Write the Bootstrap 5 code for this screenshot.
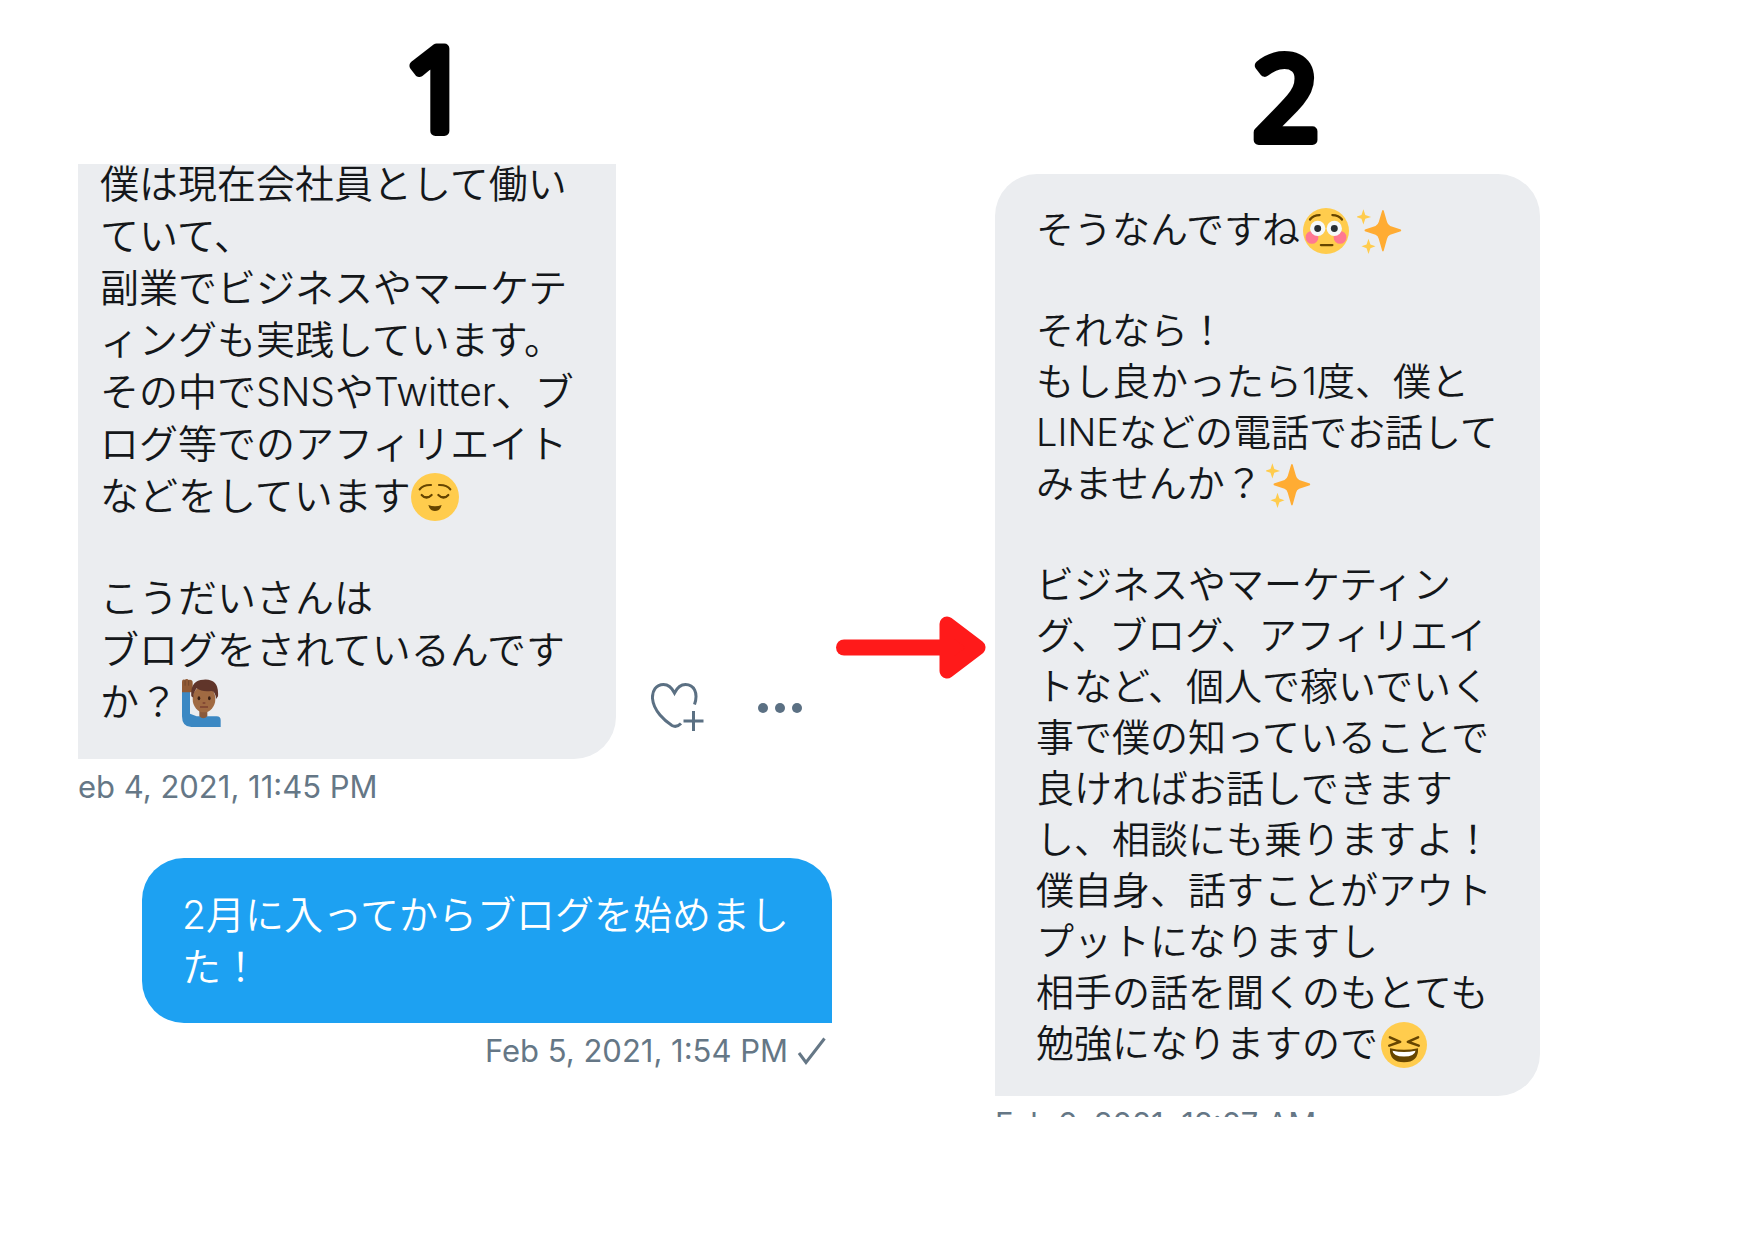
<!DOCTYPE html>
<html lang="ja">
<head>
<meta charset="utf-8">
<meta name="viewport" content="width=device-width, initial-scale=1">
<title>DM 1 → 2</title>
<link rel="stylesheet" href="https://cdn.jsdelivr.net/npm/bootstrap@5.3.0/dist/css/bootstrap.min.css">
<style>
  body { background: #fff; font-family: Inter, "Noto Sans CJK JP", sans-serif; color: #14171a; }
  .flow-grid { display: grid; grid-template-columns: 754fr 163fr 545fr; padding: 0 207px 0 78px; }
  .step-one { height: 164px; padding: 44px 0 0 329px; }
  .step-two { height: 174px; padding: 53px 0 0 260px; }
  .step-svg { font: 400 115px "Open Sans", sans-serif; stroke: #000; stroke-width: 10px; stroke-linejoin: round; overflow: visible; }
  .bubble { line-break: normal; font-weight: 350; }
  .bubble p { margin: 0; }
  .bubble p + p { margin-top: 50px; }
  .bubble-cut { width: 538px; height: 595px; padding: 0 37px 31px 22px; border-radius: 0 0 42px 0; background: #ebedf0; font-size: 39px; line-height: 52px; }
  .bubble-sent { width: 690px; padding: 31px 40px 30px 40px; border-radius: 42px 42px 0 42px; background: #1da1f2; color: #fff; font-size: 39px; line-height: 52px; }
  .bubble-in { padding: 30px 37px 27px 41px; border-radius: 42px 42px 42px 0; background: #ebedf0; font-size: 38px; line-height: 51px; }
  .stamp { font-size: 31px; line-height: 40px; color: #657786; white-space: nowrap; }
  .stamp-cut { height: 21px; }
  .emo { width: 48px; height: 48px; vertical-align: -11px; }
  .bubble-in .emo { width: 46px; height: 46px; margin-left: 3px; }
  .tool-btn { border: 0; background: none; color: #5b7083; line-height: 0; }
  .tools { gap: 53px; padding: 0 0 23px 35px; }
  .arrow-col { padding: 616px 0 0 4px; }
  .sent-row { margin-top: 51px; }
</style>
<script src="https://cdn.jsdelivr.net/npm/bootstrap@5.3.0/dist/js/bootstrap.bundle.min.js"></script>
</head>
<body>
<main class="flow-grid">
  <section class="d-flex flex-column">
    <h1 class="step-one m-0 lh-1"><svg class="step-svg d-block" width="60" height="92"><text x="-3" y="87">1</text></svg></h1>
    <div class="d-flex align-items-end">
      <div class="bubble bubble-cut flex-shrink-0 overflow-hidden d-flex flex-column justify-content-end">
        <p>僕は現在会社員として働いていて、<br>副業でビジネスやマーケティングも実践しています。<br>その中でSNSやTwitter、ブログ等でのアフィリエイトなどをしています<svg class="emo" viewBox="0 0 36 36" role="img" aria-label="relieved"><circle cx="18" cy="18" r="18" fill="#ffcc4d"/><path d="M6.500 12.300Q9 8.800 15 9M29.500 12.300Q27 8.800 21 9M8 16.500Q11.500 20.500 15.500 16.500M20.500 16.500Q24.500 20.500 28 16.500" fill="none" stroke="#664500" stroke-width="1.600" stroke-linecap="round"/><path d="M8 16.500Q12 18.500 15.500 16.500Q12 21.500 8 16.500M20.500 16.500Q24 18.500 28 16.500Q24 21.500 20.500 16.500M13 24Q18 26 23 24Q22 28.500 18 28.500Q14 28.500 13 24" fill="#664500"/></svg></p>
        <p>こうだいさんは<br>ブログをされているんですか？<svg class="emo" viewBox="0 0 36 36" role="img" aria-label="man raising hand"><path d="M3 9h6v17l5 2h15q3 0 3 3v5H10q-7 0-7-8z" fill="#3b88c3"/><path d="M3 10V2q0-2 2-1.500Q7-.5 8 .7q3-.5 3 2V8q0 2-2 2z" fill="#915a34"/><path d="M5.300 1v4M8 1v4" stroke="#6b432a" stroke-width=".6"/><path d="M16 22h6v6q-3 3-6 0z" fill="#8a5a3c"/><ellipse cx="19.500" cy="15" rx="8.500" ry="10" fill="#a06a42"/><path d="M10 13Q9 1 19 .5Q31-.5 30 13L28.500 15Q28 9 25 9Q18 10 14 7Q11.500 10 11.500 14Z" fill="#60352a"/><ellipse cx="15.700" cy="14.500" rx="1" ry="1.500" fill="#3b2014"/><ellipse cx="23.500" cy="14.500" rx="1" ry="1.500" fill="#3b2014"/><path d="M18.500 18h2M16.500 21h6" stroke="#7b4030" stroke-width="1"/></svg></p>
      </div>
      <div class="tools d-flex align-items-center">
        <button class="tool-btn p-0" type="button" aria-label="リアクションを追加"><svg width="54" height="56" viewBox="0 0 54 56" fill="none" stroke="currentColor" stroke-width="3"><path d="M43.500 24.500C47.500 13 43 4.500 34.500 4.500C29 4.500 25.500 9 23.500 13C21.500 9 18 4.500 12.500 4.500C5 4.500 1 11 1.500 18.500C2.500 31 14 41 21 45.500Q25.500 48 30 43.500"/><path d="M42.500 31v20M32.500 41h20"/></svg></button>
        <button class="tool-btn p-0" type="button" aria-label="その他"><svg width="44" height="12" fill="currentColor"><circle cx="5" cy="6" r="5"/><circle cx="22" cy="6" r="5"/><circle cx="39" cy="6" r="5"/></svg></button>
      </div>
    </div>
    <div class="stamp mt-2">eb 4, 2021, 11:45 PM</div>
    <div class="bubble bubble-sent align-self-end sent-row"><p>2月に入ってからブログを始めました！</p></div>
    <div class="stamp align-self-end mt-2 d-flex align-items-center">Feb 5, 2021, 1:54 PM<svg class="ms-2 me-1" width="32" height="32" fill="none" stroke="currentColor" stroke-width="3" role="img" aria-label="既読"><path d="M3 18L10 27.500L28.500 3.500"/></svg></div>
  </section>

  <div class="arrow-col">
    <svg class="d-block" width="150" height="64" role="img" aria-label="次へ"><path d="M8 31.500H110" stroke="#ff1a1a" stroke-width="16" stroke-linecap="round"/><path d="M111 8L142 31.500L111 55Z" fill="#ff1a1a" stroke="#ff1a1a" stroke-width="15" stroke-linejoin="round"/></svg>
  </div>

  <section>
    <h1 class="step-two m-0 lh-1"><svg class="step-svg d-block" width="64" height="92"><text x="-2" y="87">2</text></svg></h1>
    <div class="bubble bubble-in">
      <p>そうなんですね<svg class="emo" viewBox="0 0 36 36" role="img" aria-label="flushed"><circle cx="18" cy="18" r="18" fill="#ffcc4d"/><circle cx="7" cy="23" r="5" fill="#ff7892"/><circle cx="29" cy="23" r="5" fill="#ff7892"/><circle cx="11.500" cy="16" r="6" fill="#f5f8fa"/><circle cx="24.500" cy="16" r="6" fill="#f5f8fa"/><circle cx="11.500" cy="16" r="2.700" fill="#292f33"/><circle cx="24.500" cy="16" r="2.700" fill="#292f33"/><path d="M5.500 9Q8 5.500 13 5.500M30.500 9Q28 5.500 23 5.500M14 29h9" fill="none" stroke="#664500" stroke-width="1.800" stroke-linecap="round"/></svg><svg class="emo ms-2" viewBox="0 0 36 36" role="img" aria-label="sparkles"><path d="M34.300 16.900L26 14Q24 13 23.500 11L20.900 2Q20.300 1 19.700 2L17 11Q16.500 13 14.500 14L6.200 16.900Q5.500 17.500 6.200 18.200L14.500 21Q16.500 22 17 24L19.700 33.500Q20.300 34.500 20.900 33.500L23.500 24Q24 22 26 21L34.300 18.200Q35 17.500 34.300 16.900" fill="#ffac33"/><path d="M5 1L6.500 5.500L11 7L6.500 8.500L5 13L3.500 8.500L-1 7L3.500 5.500ZM9 24L10.500 28.500L14.500 30L10.500 31.500L9 36L7.500 31.500L3.500 30L7.500 28.500Z" fill="#ffcc4d"/></svg></p>
      <p>それなら！<br>もし良かったら1度、僕とLINEなどの電話でお話してみませんか？<svg class="emo" viewBox="0 0 36 36" role="img" aria-label="sparkles"><path d="M34.300 16.900L26 14Q24 13 23.500 11L20.900 2Q20.300 1 19.700 2L17 11Q16.500 13 14.500 14L6.200 16.900Q5.500 17.500 6.200 18.200L14.500 21Q16.500 22 17 24L19.700 33.500Q20.300 34.500 20.900 33.500L23.500 24Q24 22 26 21L34.300 18.200Q35 17.500 34.300 16.900" fill="#ffac33"/><path d="M5 1L6.500 5.500L11 7L6.500 8.500L5 13L3.500 8.500L-1 7L3.500 5.500ZM9 24L10.500 28.500L14.500 30L10.500 31.500L9 36L7.500 31.500L3.500 30L7.500 28.500Z" fill="#ffcc4d"/></svg></p>
      <p>ビジネスやマーケティング、ブログ、アフィリエイトなど、個人で稼いでいく事で僕の知っていることで良ければお話しできますし、相談にも乗りますよ！<br>僕自身、話すことがアウトプットになりますし<br>相手の話を聞くのもとても勉強になりますので<svg class="emo" viewBox="0 0 36 36" role="img" aria-label="laughing"><circle cx="18" cy="18" r="18" fill="#ffcc4d"/><path d="M7 12L15 15.500L6.500 18.500M29 12L21 15.500L29.500 18.500" fill="none" stroke="#664500" stroke-width="2" stroke-linecap="round" stroke-linejoin="round"/><path d="M7 20.500Q18 23 29 20.500Q29.500 31.500 18 31.500Q6.500 31.500 7 20.500" fill="#664500"/><path d="M9 22.500Q18 24.500 27 22.500Q26.500 27 18 27Q9.500 27 9 22.500" fill="#fff"/></svg></p>
    </div>
    <div class="stamp stamp-cut overflow-hidden pt-2">Feb 6, 2021, 12:07 AM</div>
  </section>
</main>
</body>
</html>
